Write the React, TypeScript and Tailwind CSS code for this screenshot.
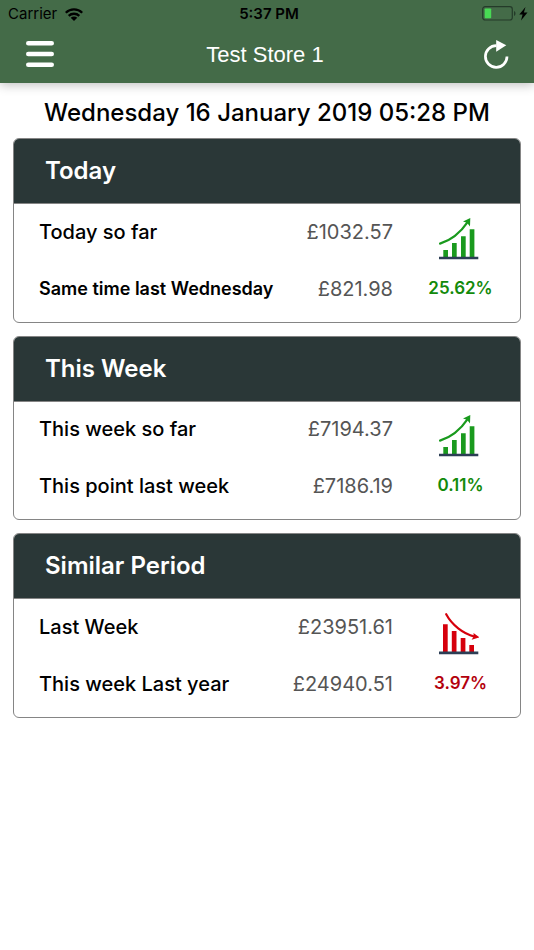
import { useState } from "react";

interface SalesRow {
  label: string;
  amount: string;
  small?: boolean;
}

interface SalesPeriod {
  title: string;
  current: SalesRow;
  previous: SalesRow;
  change: string;
  direction: "up" | "down";
}

const periods: SalesPeriod[] = [
  {
    title: "Today",
    current: { label: "Today so far", amount: "£1032.57" },
    previous: { label: "Same time last Wednesday", amount: "£821.98", small: true },
    change: "25.62%",
    direction: "up",
  },
  {
    title: "This Week",
    current: { label: "This week so far", amount: "£7194.37" },
    previous: { label: "This point last week", amount: "£7186.19" },
    change: "0.11%",
    direction: "up",
  },
  {
    title: "Similar Period",
    current: { label: "Last Week", amount: "£23951.61" },
    previous: { label: "This week Last year", amount: "£24940.51" },
    change: "3.97%",
    direction: "down",
  },
];

function TrendUpIcon() {
  return (
    <svg viewBox="0 0 40 42" className="w-10 h-[42px]" role="img" aria-label="Up">
      <g fill="#1a9a1e">
        <path d="M4.300 32H9v7H4.300zM13 25h4.700v14H13zM22 18.300h4.700V39H22zM30.700 11.300h4.700V39h-4.700z" />
        <path d="M31.300 0 24 3.400 28 4.700 31 8.600z" />
      </g>
      <path d="M1 25.600C11 22.500 21.500 14.500 28.800 3.800" fill="none" stroke="#1a9a1e" strokeWidth="2.200" strokeLinecap="round" />
      <path d="M0 38.700h39.300v2.600H0z" fill="#2c3e55" />
    </svg>
  );
}

function TrendDownIcon() {
  return (
    <svg viewBox="0 0 40 42" className="w-10 h-[42px]" role="img" aria-label="Down">
      <g fill="#d6000c">
        <path d="M4 11.200h4.700V39H4zM12.800 18h4.700v21h-4.700zM21.700 25h4.700v14h-4.700zM30.300 32H35v7h-4.700z" />
        <path d="M40.300 24.300 34.500 20 34.700 23.400 32.600 26.800z" />
      </g>
      <path d="M7.200 1.200C13 12 24 20.500 35.500 23.600" fill="none" stroke="#d6000c" strokeWidth="2.200" strokeLinecap="round" />
      <path d="M0 38.600h39.300v2.700H0z" fill="#2c3e55" />
    </svg>
  );
}

function StatusBar() {
  return (
    <div className="grid grid-cols-3 items-center h-7 pl-2 pr-1 text-[15px] text-black">
      <div className="flex items-center gap-2">
        <span>Carrier</span>
        <svg viewBox="0 0 18 13" className="w-[18px] h-[13px]" aria-hidden="true">
          <g fill="none" stroke="#000" strokeWidth="2.300">
            <path d="M0.800 4.800C5.400 0.300 12.600 0.300 17.200 4.800" />
            <path d="M3.700 7.900C6.700 5 11.300 5 14.300 7.900" />
          </g>
          <path d="M9 13 5.700 9.700C7.600 8 10.400 8 12.300 9.700z" fill="#000" />
        </svg>
      </div>
      <span className="text-center font-semibold">5:37 PM</span>
      <svg viewBox="0 0 48 16" className="w-12 h-4 justify-self-end" aria-hidden="true">
        <rect x="0.700" y="0.700" width="29.600" height="13.300" rx="2.500" fill="none" stroke="#243b29" strokeWidth="1.200" />
        <rect x="2.700" y="2.500" width="6.500" height="9.700" rx="0.800" fill="#48d954" />
        <path d="M32 5c2 .8 2 4.200 0 5z" fill="#243b29" />
        <path d="M43.500 1 37.300 8.500h3.300L39 14.500l6.500-8h-3.600z" fill="#000" />
      </svg>
    </div>
  );
}

function PeriodCard({ period }: { period: SalesPeriod }) {
  const isUp = period.direction === "up";

  return (
    <section className="rounded-md border border-[#858585] overflow-hidden">
      <h2 className="h-16 pl-[31px] flex items-center bg-[#2a3737] text-white text-2xl font-semibold">
        {period.title}
      </h2>
      <table className="w-full border-t border-[#858585] text-xl">
        <tbody>
          <tr className="h-14">
            <th scope="row" className="pl-[25px] text-left font-medium">
              {period.current.label}
            </th>
            <td className="text-right text-[#555555]">{period.current.amount}</td>
            <td className="w-[127px] pl-1 align-bottom">
              <div className="flex justify-center">{isUp ? <TrendUpIcon /> : <TrendDownIcon />}</div>
            </td>
          </tr>
          <tr className="h-[58px]">
            <th
              scope="row"
              className={`pl-[25px] text-left ${period.previous.small ? "text-lg font-semibold" : "text-xl font-medium"}`}
            >
              {period.previous.label}
            </th>
            <td className="text-right text-[#555555]">{period.previous.amount}</td>
            <td
              className={`w-[127px] pl-2 text-center text-[17px] font-semibold ${isUp ? "text-[#138a0b]" : "text-[#b3000c]"}`}
            >
              {period.change}
            </td>
          </tr>
        </tbody>
      </table>
      <div className="h-1" />
    </section>
  );
}

export default function App() {
  const [data, setData] = useState(periods);

  return (
    <div className="min-h-screen bg-white text-black font-['Inter',sans-serif]">
      <header className="bg-[#446b48] shadow-[0_2px_10px_rgba(0,0,0,0.25)]">
        <StatusBar />
        <div className="flex items-center justify-between h-[55px] px-6 pb-[3px]">
          <button type="button" aria-label="Menu" className="w-8 h-8">
            <svg viewBox="0 0 32 32" className="w-8 h-8">
              <path d="M4.300 5.300h23.400M4.300 16h23.400M4.300 26.700h23.400" stroke="#fff" strokeWidth="4.600" strokeLinecap="round" />
            </svg>
          </button>
          <h1 className="text-[22px] text-white font-['Liberation_Sans',sans-serif]">Test Store 1</h1>
          <button
            type="button"
            aria-label="Refresh"
            onClick={() => setData([...periods])}
            className="flex justify-end w-9 h-8"
          >
            <svg viewBox="0 0 28 32" className="w-7 h-8">
              <path d="M25 18.500A10.800 10.800 0 1 1 14.500 7.700" fill="none" stroke="#fff" strokeWidth="2.700" />
              <path d="M14.200 2 24.300 7.300 14.200 13.700z" fill="#fff" />
            </svg>
          </button>
        </div>
      </header>
      <main className="px-[13px] pt-3.5">
        <p className="h-[41px] text-center text-2xl font-medium">Wednesday 16 January 2019 05:28 PM</p>
        <div className="flex flex-col gap-[13px]">
          {data.map((period) => (
            <PeriodCard key={period.title} period={period} />
          ))}
        </div>
      </main>
    </div>
  );
}
